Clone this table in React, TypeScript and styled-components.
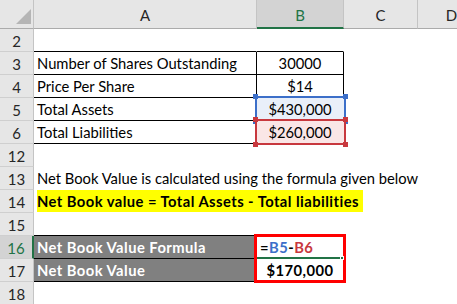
import React from "react";
import styled, { createGlobalStyle } from "styled-components";

const Global = createGlobalStyle`
  html, body { margin: 0; padding: 0; background: #ffffff; }
  * { box-sizing: border-box; }
`;

const FONT = `Lato, "Open Sans", "Liberation Sans", sans-serif`;

const Sheet = styled.div`
  display: grid;
  grid-template-columns: 34px 223px 87px 74px 68px;
  grid-template-rows: 29px;
  grid-auto-rows: 23px;
  width: 457px;
  height: 304px;
  overflow: hidden;
  font-family: ${FONT};
  font-size: 14.75px;
  color: #000;
  background: #fff;
`;

const Corner = styled.div`
  position: relative;
  background: #e6e6e6;
  border-right: 1px solid #c4c4c4;
  border-bottom: 1px solid #ababab;
`;

const CornerMark = styled.svg`
  position: absolute;
  left: 16px;
  top: 9px;
`;

const ColHead = styled.div<{ $active?: boolean }>`
  display: flex;
  align-items: center;
  justify-content: center;
  padding-top: 2px;
  font-size: 15px;
  background: ${(p) => (p.$active ? "#d3d3d3" : "#e6e6e6")};
  color: ${(p) => (p.$active ? "#217346" : "#262626")};
  border-right: 1px solid #c4c4c4;
  border-bottom: ${(p) => (p.$active ? "2px solid #217346" : "1px solid #ababab")};
`;

const RowHead = styled.div<{ $active?: boolean }>`
  display: flex;
  align-items: center;
  justify-content: center;
  padding-top: 1px;
  font-size: 15px;
  background: ${(p) => (p.$active ? "#d3d3d3" : "#e6e6e6")};
  color: ${(p) => (p.$active ? "#217346" : "#262626")};
  border-right: ${(p) => (p.$active ? "2px solid #217346" : "1px solid #c4c4c4")};
  border-bottom: 1px solid #cfcfcf;
`;

const Cell = styled.div<{
  $b?: string;
  $r?: string;
  $bg?: string;
  $align?: "left" | "center";
  $bold?: boolean;
  $color?: string;
}>`
  position: relative;
  display: flex;
  align-items: flex-end;
  justify-content: ${(p) => (p.$align === "center" ? "center" : "flex-start")};
  padding: 0 3px 1px 3px;
  line-height: 20px;
  white-space: nowrap;
  background: ${(p) => p.$bg || "transparent"};
  color: ${(p) => p.$color || "#000"};
  font-weight: ${(p) => (p.$bold ? 700 : 400)};
  letter-spacing: ${(p) => (p.$bold ? "0.45px" : "0")};
  border-bottom: 1px solid ${(p) => p.$b || "transparent"};
  border-right: 1px solid ${(p) => p.$r || "transparent"};
`;

const CellText = styled.span`
  position: relative;
  z-index: 2;
`;

const Highlight = styled.span`
  position: relative;
  z-index: 2;
  display: inline-block;
  background: #ffff00;
  line-height: 22px;
  margin-bottom: -1px;
  padding: 0 4px 0 0;
  font-weight: 700;
  letter-spacing: 0.45px;
`;

const RefBox = styled.div<{ $c: string; $fill: string }>`
  position: absolute;
  left: -2px;
  right: -3px;
  top: -2px;
  bottom: -2px;
  border: 2px solid ${(p) => p.$c};
  background: ${(p) => p.$fill};
  z-index: 1;
`;

const Handle = styled.div<{ $c: string; $x: "l" | "r"; $y: "t" | "b" }>`
  position: absolute;
  width: 5px;
  height: 5px;
  background: ${(p) => p.$c};
  ${(p) => (p.$x === "l" ? "left: -4px;" : "right: -4px;")}
  ${(p) => (p.$y === "t" ? "top: -4px;" : "bottom: -4px;")}
`;

const ResultBox = styled.div`
  position: absolute;
  left: -3px;
  right: -3px;
  top: -2px;
  height: 49px;
  border: 3px solid #ff0000;
  z-index: 3;
  pointer-events: none;
`;

const ActiveLine = styled.div`
  position: absolute;
  left: 0;
  right: 1px;
  bottom: -1px;
  height: 2px;
  background: #217346;
  z-index: 2;
`;

const FillHandle = styled.div`
  position: absolute;
  right: -1px;
  bottom: -2px;
  width: 4px;
  height: 4px;
  background: #217346;
  border: 1px solid #fff;
  z-index: 4;
`;

const Ref = styled.span<{ $c: string }>`
  color: ${(p) => p.$c};
`;

const BLACK = "#000";
const GRAY_FILL = "#808080";

const RefCell: React.FC<{ c: string; fill: string; text: string }> = ({ c, fill, text }) => (
  <Cell $align="center" $r={BLACK} $b={BLACK}>
    <RefBox $c={c} $fill={fill}>
      <Handle $c={c} $x="l" $y="t" />
      <Handle $c={c} $x="r" $y="t" />
      <Handle $c={c} $x="l" $y="b" />
      <Handle $c={c} $x="r" $y="b" />
    </RefBox>
    <CellText>{text}</CellText>
  </Cell>
);

export default function App() {
  return (
    <>
      <Global />
      <Sheet>
        <Corner>
          <CornerMark width="15" height="15" viewBox="0 0 15 15">
            <polygon points="15,0 15,15 0,15" fill="#b5b5b5" />
          </CornerMark>
        </Corner>
        <ColHead>A</ColHead>
        <ColHead $active>B</ColHead>
        <ColHead>C</ColHead>
        <ColHead>D</ColHead>

        {/* Row 2 */}
        <RowHead>2</RowHead>
        <Cell $b={BLACK} />
        <Cell $b={BLACK} />
        <Cell />
        <Cell />

        {/* Row 3 */}
        <RowHead>3</RowHead>
        <Cell $b={BLACK} $r={BLACK}>Number of Shares Outstanding</Cell>
        <Cell $align="center" $b={BLACK} $r={BLACK}>30000</Cell>
        <Cell />
        <Cell />

        {/* Row 4 */}
        <RowHead>4</RowHead>
        <Cell $b={BLACK} $r={BLACK}>Price Per Share</Cell>
        <Cell $align="center" $b={BLACK} $r={BLACK}>$14</Cell>
        <Cell />
        <Cell />

        {/* Row 5 */}
        <RowHead>5</RowHead>
        <Cell $b={BLACK} $r={BLACK}>Total Assets</Cell>
        <RefCell c="#3c6fc9" fill="#e9eff9" text="$430,000" />
        <Cell />
        <Cell />

        {/* Row 6 */}
        <RowHead>6</RowHead>
        <Cell $b={BLACK} $r={BLACK}>Total Liabilities</Cell>
        <RefCell c="#c8383e" fill="#fae6e6" text="$260,000" />
        <Cell />
        <Cell />

        {/* Row 12 */}
        <RowHead>12</RowHead>
        <Cell />
        <Cell />
        <Cell />
        <Cell />

        {/* Row 13 */}
        <RowHead>13</RowHead>
        <Cell>Net Book Value is calculated using the formula given below</Cell>
        <Cell />
        <Cell />
        <Cell />

        {/* Row 14 */}
        <RowHead>14</RowHead>
        <Cell>
          <Highlight>Net Book value = Total Assets - Total liabilities</Highlight>
        </Cell>
        <Cell />
        <Cell />
        <Cell />

        {/* Row 15 */}
        <RowHead>15</RowHead>
        <Cell $b={BLACK} />
        <Cell />
        <Cell />
        <Cell />

        {/* Row 16 */}
        <RowHead $active>16</RowHead>
        <Cell $bg={GRAY_FILL} $color="#fff" $bold $b={BLACK} $r={BLACK}>
          Net Book Value Formula
        </Cell>
        <Cell $bold>
          <ResultBox />
          <ActiveLine />
          <FillHandle />
          <CellText>
            =<Ref $c="#3c6fc9">B5</Ref>-<Ref $c="#c8383e">B6</Ref>
          </CellText>
        </Cell>
        <Cell />
        <Cell />

        {/* Row 17 */}
        <RowHead>17</RowHead>
        <Cell $bg={GRAY_FILL} $color="#fff" $bold $b={BLACK} $r={BLACK}>
          Net Book Value
        </Cell>
        <Cell $align="center" $bold>
          <CellText>$170,000</CellText>
        </Cell>
        <Cell />
        <Cell />

        {/* Row 18 */}
        <RowHead>18</RowHead>
        <Cell />
        <Cell />
        <Cell />
        <Cell />
      </Sheet>
    </>
  );
}
